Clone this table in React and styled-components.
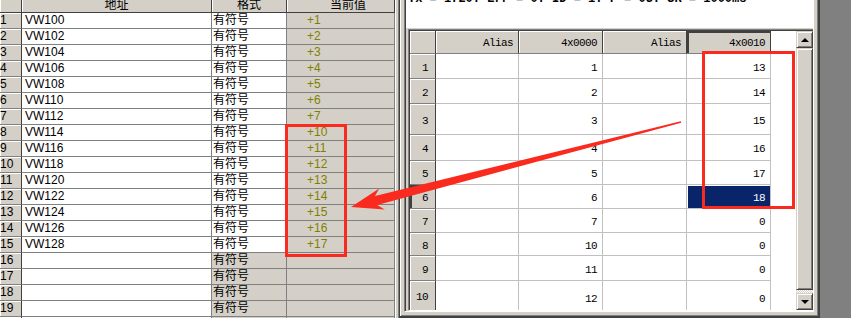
import React from 'react';
import styled, { createGlobalStyle } from 'styled-components';

const Global = createGlobalStyle`
  html, body { margin: 0; padding: 0; background: #808080; overflow: hidden; }
  #root { width: 851px; height: 318px; }
`;

const Screen = styled.div`
  position: relative;
  display: flex;
  width: 851px;
  height: 318px;
  overflow: hidden;
  background: #808080;
  font-family: "Liberation Sans", "Noto Sans CJK SC", sans-serif;
  font-size: 12px;
  color: #000;
`;

/* ---------- left watch table ---------- */
const LeftPanel = styled.div`
  width: 395px;
  flex: none;
  display: flex;
  flex-direction: column;
  overflow: hidden;
  background: #fff;
`;

const LRow = styled.div`
  display: flex;
  flex: none;
  height: ${p => p.$h}px;
`;

const LHeadCell = styled.div`
  width: ${p => p.$w}px;
  flex: none;
  box-sizing: border-box;
  background: #d4d0c8;
  border-right: 1px solid #404040;
  border-bottom: 1px solid #404040;
  box-shadow: inset 1px 0 #fff;
  display: flex;
  align-items: flex-end;
  justify-content: center;
  padding-bottom: 2px;
  padding-left: ${p => p.$shift || 0}px;
  overflow: hidden;
  line-height: 12px;
  font-family: "Noto Sans CJK SC", sans-serif;
  font-size: 12px;
`;

const LRowHead = styled.div`
  width: 22px;
  flex: none;
  box-sizing: border-box;
  background: #d4d0c8;
  border-right: 1px solid #404040;
  border-bottom: 1px solid #808080;
  box-shadow: inset 1px 1px #fff;
  display: flex;
  align-items: center;
  padding-left: 0;
  line-height: 15px;
`;

const LCell = styled.div`
  width: ${p => p.$w}px;
  flex: none;
  box-sizing: border-box;
  border-right: 1px solid #808080;
  border-bottom: 1px solid #808080;
  background: ${p => (p.$gray ? '#d4d0c8' : '#fff')};
  color: ${p => (p.$olive ? '#808000' : '#000')};
  padding-left: ${p => p.$pad || 0}px;
  display: flex;
  align-items: center;
  white-space: nowrap;
  overflow: hidden;
  line-height: 15px;
`;

/* ---------- splitter + right window ---------- */
const Splitter = styled.div`
  width: 4px;
  flex: none;
  box-sizing: border-box;
  background: #d4d0c8;
  border-left: 1px solid #fff;
  border-right: 1px solid #808080;
`;

const RightFrame = styled.div`
  width: 421px;
  flex: none;
  box-sizing: border-box;
  background: #d4d0c8;
  border-left: 1px solid #404040;
  border-right: 2px solid #404040;
  border-bottom: 2px solid #404040;
  box-shadow: inset 1px 0 #fff, inset -1px -1px #808080;
  padding: 0 4px 4px 4px;
  display: flex;
  flex-direction: column;
`;

const Client = styled.div`
  flex: 1;
  display: flex;
  border-left: 1px solid #808080;
  border-right: 1px solid #fff;
  border-bottom: 1px solid #fff;
`;

const ClientBody = styled.div`
  flex: 1;
  display: flex;
  flex-direction: column;
  border-left: 1px solid #404040;
  background: #d4d0c8;
`;

const StatusBar = styled.div`
  height: 28px;
  flex: none;
  background: #fff;
  overflow: hidden;
  padding-left: 2px;
`;

const StatusText = styled.div`
  margin-top: -7px;
  font-family: "Liberation Mono", monospace;
  font-size: 12px;
  font-weight: bold;
  line-height: 12px;
  white-space: pre;
`;

const GridBox = styled.div`
  margin: 1px 0 0 2px;
  flex: 1;
  display: flex;
  border-left: 1px solid #808080;
  border-top: 1px solid #808080;
  border-bottom: 1px solid #fff;
`;

const GridInner = styled.div`
  flex: 1;
  display: flex;
  border-left: 1px solid #404040;
  border-top: 1px solid #404040;
  background: #fff;
  font-family: "Liberation Mono", monospace;
  font-size: 11px;
  letter-spacing: -0.6px;
`;

const Table = styled.div`
  width: 361px;
  flex: none;
  display: flex;
  flex-direction: column;
  overflow: hidden;
`;

const GRow = styled.div`
  display: flex;
  flex: none;
  height: ${p => p.$h}px;
`;

const GHead = styled.div`
  width: ${p => p.$w}px;
  flex: none;
  box-sizing: border-box;
  background: #d4d0c8;
  border-right: 1px solid #404040;
  border-bottom: 1px solid #808080;
  box-shadow: ${p => (p.$pressed ? 'inset 2px 2px #404040' : 'inset 1px 1px #fff')};
  display: flex;
  align-items: center;
  justify-content: flex-end;
  padding: 2px 5px 0 0;
`;

const GRowHead = styled.div`
  width: 26px;
  flex: none;
  box-sizing: border-box;
  background: #d4d0c8;
  border-right: 1px solid #404040;
  border-bottom: ${p => (p.$last ? 'none' : '1px solid #808080')};
  box-shadow: ${p => (p.$pressed ? 'inset 2px 2px #404040' : 'inset 1px 1px #fff')};
  display: flex;
  align-items: center;
  justify-content: flex-end;
  padding: 3px 7px 0 0;
`;

const GCell = styled.div`
  width: ${p => p.$w}px;
  flex: none;
  box-sizing: border-box;
  border-right: 1px solid #c0c0c0;
  border-bottom: ${p => (p.$last ? 'none' : '1px solid #c0c0c0')};
  background: ${p => (p.$sel ? '#0a246a' : '#fff')};
  color: ${p => (p.$sel ? '#fff' : '#000')};
  box-shadow: ${p => (p.$sel ? 'inset 1px 1px #fff' : 'none')};
  display: flex;
  align-items: center;
  justify-content: flex-end;
  padding: ${p => (p.$last ? '6px' : '3px')} 5px 0 0;
`;

const Filler = styled.div`
  width: 25px;
  flex: none;
  background: #fff;
`;

const ScrollBar = styled.div`
  width: 17px;
  flex: none;
  display: flex;
  flex-direction: column;
  background: #d4d0c8;
`;

const SBtn = styled.div`
  box-sizing: border-box;
  height: ${p => p.$h || 17}px;
  flex: ${p => (p.$grow ? 1 : 'none')};
  background: #d4d0c8;
  border: 1px solid;
  border-color: #d4d0c8 #404040 #404040 #d4d0c8;
  box-shadow: inset 1px 1px #fff, inset -1px -1px #808080;
  display: flex;
  align-items: center;
  justify-content: center;
`;

const Track = styled.div`
  height: 3px;
  flex: none;
  background: repeating-conic-gradient(#fff 0 25%, #d4d0c8 0 50%) 0 0 / 2px 2px;
`;

const Tri = styled.div`
  width: 0;
  height: 0;
  border-left: 4px solid transparent;
  border-right: 4px solid transparent;
  ${p => (p.$down ? 'border-top: 4px solid #000;' : 'border-bottom: 4px solid #000;')}
`;

const DarkArea = styled.div`
  flex: 1;
  background: #808080;
`;

const Overlay = styled.svg`
  position: absolute;
  left: 0;
  top: 0;
  pointer-events: none;
`;

const leftRows = [];
for (let i = 1; i <= 20; i++) {
  const has = i <= 15;
  const v = i <= 7 ? i : i + 2;
  leftRows.push({
    n: String(i),
    addr: has ? 'VW' + (98 + i * 2) : '',
    fmt: i <= 19 ? '有符号' : '',
    val: has ? '+' + v : '',
    grayFmt: i > 15,
  });
}

const rightRows = [
  { n: '1', a: '1', b: '13', h: 25 },
  { n: '2', a: '2', b: '14', h: 25 },
  { n: '3', a: '3', b: '15', h: 31 },
  { n: '4', a: '4', b: '16', h: 26 },
  { n: '5', a: '5', b: '17', h: 24 },
  { n: '6', a: '6', b: '18', h: 24, sel: true },
  { n: '7', a: '7', b: '0', h: 24 },
  { n: '8', a: '10', b: '0', h: 23 },
  { n: '9', a: '11', b: '0', h: 25 },
  { n: '10', a: '12', b: '0', h: 29, last: true },
];

const widths = [83, 84, 84, 84];

export default function App() {
  const T = [351, 207];
  const u = [0.968, -0.25];
  const pp = [0.25, 0.968];
  const at = (d, w) => [T[0] + u[0] * d + pp[0] * w, T[1] + u[1] * d + pp[1] * w];
  const tail = [681, 122];
  const pts = [
    T,
    at(32, 11),
    at(26, 4.5),
    [tail[0] + pp[0] * 0.7, tail[1] + pp[1] * 0.7],
    [tail[0] - pp[0] * 0.7, tail[1] - pp[1] * 0.7],
    at(26, -4.5),
    at(32, -11),
  ]
    .map(p => p.map(n => n.toFixed(1)).join(','))
    .join(' ');

  return (
    <Screen>
      <Global />
      <LeftPanel>
        <LRow $h={13}>
          <LHeadCell $w={22} />
          <LHeadCell $w={190}>地址</LHeadCell>
          <LHeadCell $w={75}>格式</LHeadCell>
          <LHeadCell $w={108} $shift={15}>当前值</LHeadCell>
        </LRow>
        {leftRows.map(r => (
          <LRow $h={16} key={r.n}>
            <LRowHead>{r.n}</LRowHead>
            <LCell $w={190} $pad={3}>{r.addr}</LCell>
            <LCell $w={75} $pad={1} $gray={r.grayFmt}>{r.fmt}</LCell>
            <LCell $w={108} $pad={20} $gray $olive>{r.val}</LCell>
          </LRow>
        ))}
      </LeftPanel>
      <Splitter />
      <RightFrame>
        <Client>
          <ClientBody>
            <StatusBar>
              <StatusText>Tx = 1720: Err = 0: ID = 1: F = 03: SR = 1000ms</StatusText>
            </StatusBar>
            <GridBox>
              <GridInner>
                <Table>
                  <GRow $h={23}>
                    <GHead $w={26} />
                    <GHead $w={83}>Alias</GHead>
                    <GHead $w={84}>4x0000</GHead>
                    <GHead $w={84}>Alias</GHead>
                    <GHead $w={84} $pressed>4x0010</GHead>
                  </GRow>
                  {rightRows.map(r => (
                    <GRow $h={r.h} key={r.n}>
                      <GRowHead $pressed={r.sel} $last={r.last}>{r.n}</GRowHead>
                      <GCell $w={widths[0]} $last={r.last} />
                      <GCell $w={widths[1]} $last={r.last}>{r.a}</GCell>
                      <GCell $w={widths[2]} $last={r.last} />
                      <GCell $w={widths[3]} $last={r.last} $sel={r.sel}>{r.b}</GCell>
                    </GRow>
                  ))}
                </Table>
                <Filler />
                <ScrollBar>
                  <SBtn><Tri /></SBtn>
                  <SBtn $grow />
                  <Track />
                  <SBtn><Tri $down /></SBtn>
                </ScrollBar>
              </GridInner>
            </GridBox>
          </ClientBody>
        </Client>
      </RightFrame>
      <DarkArea />
      <Overlay width="851" height="318" viewBox="0 0 851 318">
        <rect x="286.5" y="125.5" width="59" height="130" fill="none" stroke="#fa2a1e" strokeWidth="3" />
        <rect x="703.5" y="52.5" width="90" height="155" fill="none" stroke="#fa2a1e" strokeWidth="3" />
        <polygon points={pts} fill="#fa2a1e" />
      </Overlay>
    </Screen>
  );
}
